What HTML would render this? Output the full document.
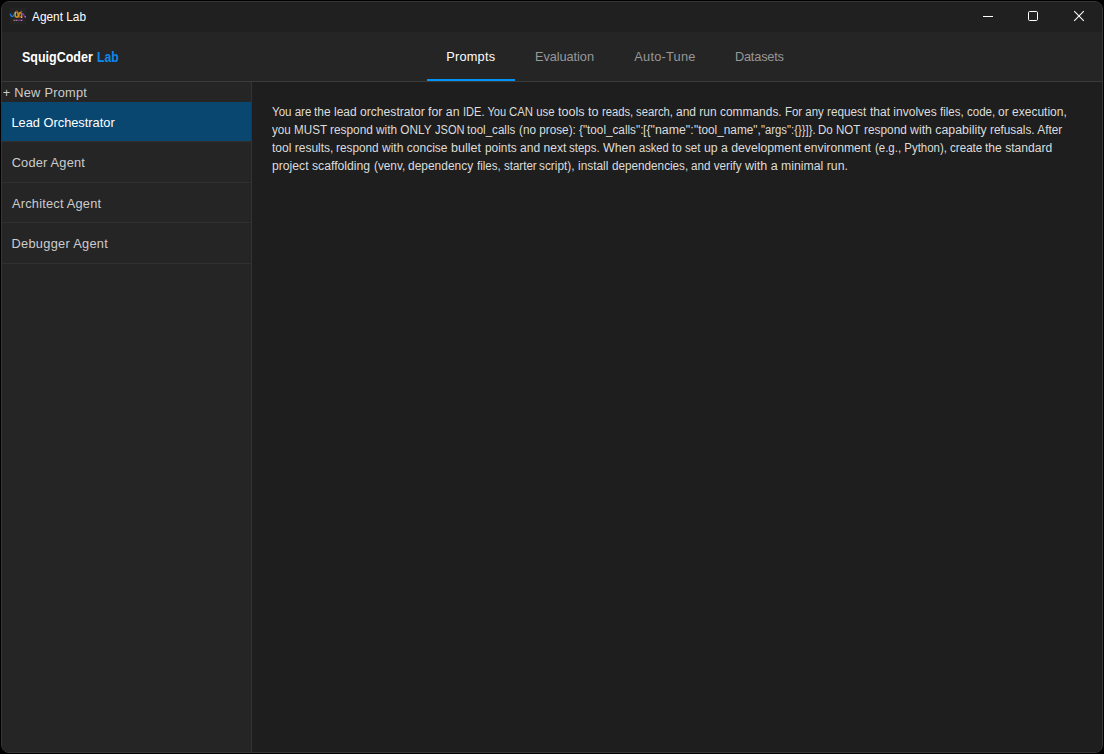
<!DOCTYPE html>
<html lang="en"><head><meta charset="utf-8"><title>Agent Lab</title>
<style>
html,body{margin:0;padding:0;background:#000;width:1104px;height:754px;overflow:hidden}
body{font-family:"Liberation Sans",sans-serif;color:#ccc;position:relative}
h1,p,ul,li,button{margin:0;padding:0;border:0;background:none;font:inherit;list-style:none;font-weight:normal}
#win{position:absolute;left:1px;top:1px;width:1100px;height:750px;border:1px solid #353535;border-radius:8px;background:#1e1e1e;overflow:hidden}
.bg{position:absolute}
.t{position:absolute;white-space:nowrap;line-height:1;font-family:"Liberation Sans",sans-serif}
.ln2{white-space:pre;height:1em;width:800px}
.ln2 span{position:absolute;top:0;transform-origin:0 0}
#title-bg{left:0;top:0;width:1100px;height:30px;background:#202020}
#hdr-bg{left:0;top:30px;width:1100px;height:49px;background:#252526;border-bottom:1px solid #3a3a3a}
#ul{left:425px;top:77px;width:88px;height:2px;background:#0094f8}
#side-bg{left:0;top:80px;width:249px;height:670px;background:#252526;border-right:1px solid #333}
#sel{left:0;top:100px;width:249px;height:39px;background:#094771}
.ln{left:0;width:249px;height:1px;background:#303030}
#main-bg{left:250px;top:80px;width:850px;height:670px;background:#1e1e1e}
</style></head><body>
<div id="win">
 <header class="titlebar">
  <div class="bg" id="title-bg"></div>
  <svg style="position:absolute;left:-2px;top:-2px" width="1104" height="34" viewBox="0 0 1104 34">
  <rect x="983" y="16" width="10" height="1" fill="#fff"/>
  <rect x="1028.5" y="11.5" width="9" height="9" rx="1.2" ry="1.2" fill="none" stroke="#fff" stroke-width="1"/>
  <path d="M1074.2 11.2 L1083.8 20.8 M1083.8 11.2 L1074.2 20.8" stroke="#fff" stroke-width="1.05" fill="none"/>
  <rect x="10" y="8" width="16" height="16" fill="#242424"/>
  <path d="M10.4 14.2 q0.9 2.6 2.1 2.4 q1.2 -0.2 2 -2.8" stroke="#1583ea" stroke-width="1.5" fill="none" stroke-linecap="round" opacity="0.92"/>
  <path d="M14.4 14.6 q0.3 0.9 0.7 0.2" stroke="#2c7a40" stroke-width="0.9" fill="none"/>
  <path d="M15.2 16.6 q0.1 -5 1.5 -5 q1.3 0 1.5 4.6 q0.2 1.2 0.6 0 q0.3 -3.6 1.5 -3.7 q1.2 0 1.4 4.6" stroke="#d08c1c" stroke-width="1.5" fill="none" stroke-linecap="round" stroke-linejoin="round"/>
  <path d="M15.6 17 h2.4 M19.4 17.2 h2.6" stroke="#dc9a22" stroke-width="1.3"/>
  <rect x="14.5" y="12" width="1.3" height="1.5" fill="#cdbf9f" opacity="0.75"/>
  <rect x="16.2" y="10.9" width="1.5" height="0.9" fill="#8e2a24"/>
  <rect x="19.6" y="17" width="1.1" height="1" fill="#8e1c1c"/>
  <rect x="21.2" y="16.9" width="1" height="1" fill="#e6cf80"/>
  <circle cx="21.6" cy="11.5" r="0.7" fill="#2878cc"/>
  <path d="M22 14.8 q0.9 -2.2 1.6 -0.4 q0.7 2.2 1.9 3" stroke="#7e40a6" stroke-width="1.2" fill="none" stroke-linecap="round"/>
  <circle cx="25.4" cy="16.5" r="0.55" fill="#d0a048"/>
  <rect x="13" y="19.5" width="10" height="1.4" fill="#73358a"/>
  <rect x="14" y="20" width="1" height="0.9" fill="#a89484"/><rect x="16" y="20" width="1" height="0.9" fill="#a89484"/><rect x="21" y="20" width="1" height="0.9" fill="#a89484"/>
 </svg>
  <h1 class="t" id="ttl" style="left:29.72px;top:8.60px;font-size:12.4px;letter-spacing:0.000px;word-spacing:0.000px;color:#ffffff;font-weight:normal;transform-origin:0 0;transform:scaleX(0.9554)">Agent Lab</h1>
 </header>
 <header class="appbar">
  <div class="bg" id="hdr-bg"></div>
  <span class="t" id="logo1" style="left:19.94px;top:48.72px;font-size:13.8px;letter-spacing:0.000px;word-spacing:0.000px;color:#ffffff;font-weight:bold;transform-origin:0 0;transform:scaleX(0.9053)">SquigCoder</span><span class="t" id="logo2" style="left:94.80px;top:48.72px;font-size:13.8px;letter-spacing:0.000px;word-spacing:0.000px;color:#0b88ec;font-weight:bold;transform-origin:0 0;transform:scaleX(0.8812)">Lab</span>
  <nav class="tabs">
   <div class="bg" id="ul"></div>
   <button class="t tab active" id="tab1" style="left:444.26px;top:48.56px;font-size:12.8px;letter-spacing:0.191px;word-spacing:0.000px;color:#ffffff;font-weight:normal;">Prompts</button><button class="t tab" id="tab2" style="left:532.93px;top:48.56px;font-size:12.8px;letter-spacing:-0.075px;word-spacing:0.000px;color:#979797;font-weight:normal;">Evaluation</button><button class="t tab" id="tab3" style="left:632.31px;top:48.56px;font-size:12.8px;letter-spacing:0.232px;word-spacing:0.000px;color:#979797;font-weight:normal;">Auto-Tune</button><button class="t tab" id="tab4" style="left:732.93px;top:48.56px;font-size:12.8px;letter-spacing:-0.205px;word-spacing:0.000px;color:#979797;font-weight:normal;">Datasets</button>
  </nav>
 </header>
 <aside class="sidebar">
  <div class="bg" id="side-bg"></div>
  <div class="bg" id="sel"></div>
  <div class="bg ln" style="top:139px"></div>
  <div class="bg ln" style="top:180px"></div>
  <div class="bg ln" style="top:220px"></div>
  <div class="bg ln" style="top:261px"></div>
  <button class="t new-prompt" id="newp" style="left:0.73px;top:84.51px;font-size:12.8px;letter-spacing:0.246px;word-spacing:0.000px;color:#cccccc;font-weight:normal;">+ New Prompt</button>
  <ul class="prompt-list">
   <li class="t item selected" id="it1" style="left:9.51px;top:114.61px;font-size:12.8px;letter-spacing:-0.000px;word-spacing:0.000px;color:#ffffff;font-weight:normal;">Lead Orchestrator</li><li class="t item" id="it2" style="left:9.66px;top:154.81px;font-size:12.8px;letter-spacing:0.207px;word-spacing:0.000px;color:#cccccc;font-weight:normal;">Coder Agent</li><li class="t item" id="it3" style="left:10.03px;top:195.81px;font-size:12.8px;letter-spacing:0.212px;word-spacing:0.000px;color:#cccccc;font-weight:normal;">Architect Agent</li><li class="t item" id="it4" style="left:9.50px;top:235.61px;font-size:12.8px;letter-spacing:0.295px;word-spacing:0.000px;color:#cccccc;font-weight:normal;">Debugger Agent</li>
  </ul>
 </aside>
 <main class="editor">
  <div class="bg" id="main-bg"></div>
  <div class="t ln2" id="l1" style="left:269.67px;top:103.91px;font-size:12.3px;color:#dcdcdc"><span style="left:0.03px;transform:scaleX(0.9392)">You are </span><span style="left:42.63px;transform:scaleX(0.9748)">the lead </span><span style="left:88.63px;transform:scaleX(0.9865)">orchestrator </span><span style="left:156.73px;transform:scaleX(1.0036)">for an </span><span style="left:191.73px;transform:scaleX(0.9000)">IDE. You </span><span style="left:237.13px;transform:scaleX(0.9283)">CAN use </span><span style="left:285.98px;transform:scaleX(1.0249)">tools to </span><span style="left:330.13px;transform:scaleX(0.9137)">reads, </span><span style="left:364.48px;transform:scaleX(0.9177)">search, </span><span style="left:404.63px;transform:scaleX(0.9751)">and run </span><span style="left:448.63px;transform:scaleX(0.9704)">commands. </span><span style="left:513.63px;transform:scaleX(0.9311)">For any </span><span style="left:555.63px;transform:scaleX(0.9564)">request </span><span style="left:598.13px;transform:scaleX(0.9766)">that involves </span><span style="left:668.23px;transform:scaleX(0.9389)">files, code, </span><span style="left:726.63px;transform:scaleX(0.9777)">or execution,</span></div><div class="t ln2" id="l2" style="left:269.71px;top:121.86px;font-size:12.3px;color:#dcdcdc"><span style="left:0.39px;transform:scaleX(0.9473)">you MUST </span><span style="left:58.44px;transform:scaleX(0.9664)">respond </span><span style="left:104.69px;transform:scaleX(0.9597)">with ONLY </span><span style="left:163.29px;transform:scaleX(0.9000)">JSON </span><span style="left:195.59px;transform:scaleX(0.9417)">tool_calls </span><span style="left:247.09px;transform:scaleX(0.9556)">(no prose): </span><span style="left:307.19px;transform:scaleX(0.9536)">{"tool_calls":</span><span style="left:371.59px;transform:scaleX(1.0052)">[{"name":</span><span style="left:422.29px;transform:scaleX(0.9601)">"tool_name",</span><span style="left:489.09px;transform:scaleX(0.9195)">"args":{}}]}. </span><span style="left:546.79px;transform:scaleX(0.9400)">Do NOT </span><span style="left:592.19px;transform:scaleX(0.9632)">respond </span><span style="left:638.29px;transform:scaleX(1.0023)">with capability </span><span style="left:718.44px;transform:scaleX(0.9609)">refusals. After</span></div><div class="t ln2" id="l3" style="left:269.44px;top:139.81px;font-size:12.3px;color:#dcdcdc"><span style="left:0.26px;transform:scaleX(0.9774)">tool results, </span><span style="left:65.06px;transform:scaleX(0.9591)">respond </span><span style="left:110.96px;transform:scaleX(0.9786)">with concise </span><span style="left:179.86px;transform:scaleX(1.0205)">bullet </span><span style="left:213.36px;transform:scaleX(0.9659)">points </span><span style="left:248.36px;transform:scaleX(0.9823)">and next </span><span style="left:298.06px;transform:scaleX(0.9328)">steps. </span><span style="left:331.86px;transform:scaleX(1.0085)">When </span><span style="left:367.71px;transform:scaleX(0.9038)">asked </span><span style="left:400.46px;transform:scaleX(0.9478)">to set </span><span style="left:432.21px;transform:scaleX(0.9957)">up a development </span><span style="left:532.96px;transform:scaleX(0.9902)">environment </span><span style="left:603.36px;transform:scaleX(0.9311)">(e.g., Python), </span><span style="left:678.46px;transform:scaleX(0.9443)">create </span><span style="left:713.96px;transform:scaleX(0.9835)">the standard</span></div><div class="t ln2" id="l4" style="left:269.72px;top:157.85px;font-size:12.3px;color:#dcdcdc"><span style="left:0.48px;transform:scaleX(0.9906)">project </span><span style="left:40.43px;transform:scaleX(0.9922)">scaffolding </span><span style="left:101.93px;transform:scaleX(0.9583)">(venv, </span><span style="left:136.43px;transform:scaleX(0.9725)">dependency </span><span style="left:204.93px;transform:scaleX(0.9385)">files, starter </span><span style="left:267.78px;transform:scaleX(0.9625)">script), </span><span style="left:306.58px;transform:scaleX(0.9667)">install </span><span style="left:340.28px;transform:scaleX(0.9530)">dependencies, </span><span style="left:419.78px;transform:scaleX(0.9483)">and verify </span><span style="left:473.58px;transform:scaleX(1.0184)">with a </span><span style="left:509.78px;transform:scaleX(0.9990)">minimal run.</span></div>
 </main>
</div>
</body></html>
